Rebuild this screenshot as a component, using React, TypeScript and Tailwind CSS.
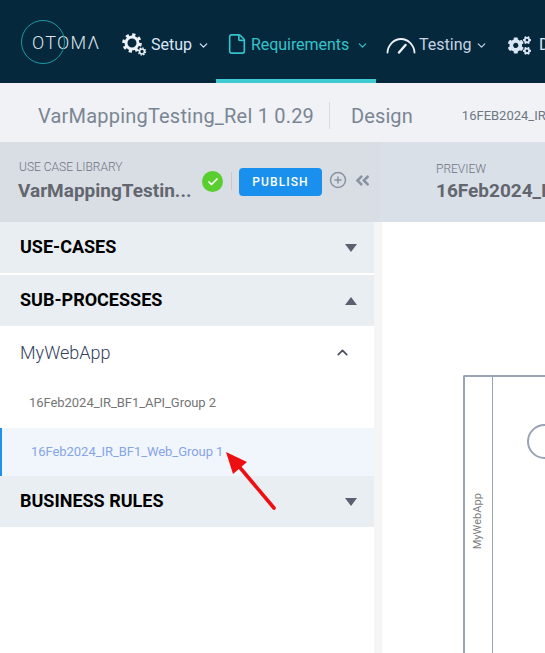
import { Check, ChevronDown, ChevronUp, CirclePlus, File } from 'lucide-react';
import { FaAngleDoubleLeft, FaCogs } from 'react-icons/fa';

function SetupIcon() {
  return (
    <svg width="25" height="24" viewBox="0 0 25 24" fill="none" stroke="#edf1f6">
      <circle cx="10" cy="10" r="6" strokeWidth="3" />
      <circle cx="10" cy="10" r="8.3" strokeWidth="3" strokeDasharray="3.2 3.3" />
      <circle cx="20" cy="18.5" r="2.4" strokeWidth="1.5" />
      <circle cx="20" cy="18.5" r="3.6" strokeWidth="1.3" strokeDasharray="1.5 1.3" />
    </svg>
  );
}

function GaugeIcon() {
  return (
    <svg width="30" height="17" viewBox="0 0 30 17" fill="none" stroke="#edf1f6" strokeLinecap="round">
      <path d="M1.5 15.5C2 8 8 2 15 2s13 6 13.5 13.5" strokeWidth="1.8" />
      <path d="M13 15.5L19.5 8" strokeWidth="2.4" />
    </svg>
  );
}

function Accordion({ title, open }: { title: string; open?: boolean }) {
  return (
    <div className="h-[51px] shrink-0 flex items-center justify-between pl-5 pr-[17px] bg-[#e9eef2]">
      <span className="text-[18px] font-bold text-black pb-[2px]">{title}</span>
      {open ? (
        <span className="w-0 h-0 border-x-[6px] border-x-transparent border-b-[8px] border-b-[#5a6070]" />
      ) : (
        <span className="w-0 h-0 border-x-[6px] border-x-transparent border-t-[8px] border-t-[#5a6070]" />
      )}
    </div>
  );
}

export default function App() {
  return (
    <div className="relative w-[545px] h-[653px] overflow-hidden bg-white flex flex-col font-['Roboto',sans-serif]">
      <nav className="h-[83px] shrink-0 bg-[#05283c] flex items-stretch">
        <div className="relative w-[122px] shrink-0 flex items-center pl-8">
          <span className="absolute left-[21px] top-[20px] w-[44px] h-[44px] rounded-full border border-[#1f9aa3]" />
          <span className="text-[18px] font-light text-[#dfe5ea] tracking-[1.3px] pt-[1px]">OTOMΛ</span>
        </div>
        <div className="w-[94px] shrink-0 flex items-center text-[#dbe6f5] pt-[7px]">
          <SetupIcon />
          <span className="ml-1 text-[16px]">Setup</span>
          <ChevronDown size={13} strokeWidth={2.2} className="ml-[5px]" />
        </div>
        <div className="w-[160px] shrink-0 flex items-center pl-[10px] border-b-4 border-[#3fcbd2] text-[#35c3cc] pt-[11px]">
          <File size={22} strokeWidth={1.8} className="mb-[2px]" />
          <span className="ml-[3px] text-[16px] tracking-[-0.05px]">Requirements</span>
          <ChevronDown size={13} strokeWidth={2.2} className="ml-[7px]" />
        </div>
        <div className="w-[132px] shrink-0 flex items-center pl-[10px] text-[#c5d3e3] pt-[7px]">
          <GaugeIcon />
          <span className="ml-[3px] text-[16px]">Testing</span>
          <ChevronDown size={13} strokeWidth={2.2} className="ml-[4px]" />
        </div>
        <div className="shrink-0 flex items-center text-[#dbe6f5] pt-[7px]">
          <FaCogs size={23} />
          <span className="ml-2 text-[16px]">Design</span>
        </div>
      </nav>

      <div className="h-[59px] shrink-0 bg-[#f0f2f5] flex items-center pl-[38px] whitespace-nowrap">
        <span className="text-[20px] text-[#7a8594] tracking-[0.2px] pt-[7px]">VarMappingTesting_Rel 1 0.29</span>
        <span className="w-px h-[27px] shrink-0 bg-[#d6dade] ml-[15px] mt-[6px]" />
        <span className="ml-[21px] text-[20px] text-[#7a8594] tracking-[0.1px] pt-[7px]">Design</span>
        <span className="ml-[49px] text-[13px] text-[#6f7784] pt-[7px]">16FEB2024_IR_BF1_Web_Group 1</span>
      </div>

      <div className="h-[80px] shrink-0 flex whitespace-nowrap">
        <div className="w-[380px] shrink-0 bg-[#d9dee5] flex items-start pl-[18px]">
          <div className="w-[176px] shrink-0 pt-[18px]">
            <div className="text-[12px] font-light text-[#6f7280] pl-px leading-[14px]">USE CASE LIBRARY</div>
            <div className="text-[19px] font-bold text-[#63666f] leading-[24px] mt-[5px]">VarMappingTestin...</div>
          </div>
          <span className="ml-[8px] mt-[29px] w-[21px] h-[21px] shrink-0 rounded-full bg-[#59cf2f] flex items-center justify-center">
            <Check size={12} strokeWidth={3.5} className="text-white" />
          </span>
          <span className="ml-[8px] mt-[30px] w-px h-[18px] shrink-0 bg-[#c5cad2]" />
          <button className="ml-[7px] mt-[26px] w-[83px] h-[28px] shrink-0 rounded-sm bg-[#1a90ee] text-white text-[12px] font-medium tracking-[1.1px]">
            PUBLISH
          </button>
          <CirclePlus size={18} strokeWidth={2} className="ml-[7px] mt-[29px] shrink-0 text-[#8a93a2]" />
          <FaAngleDoubleLeft size={17} className="ml-[7px] mt-[30px] shrink-0 text-[#8a93a2]" />
        </div>
        <div className="flex-1 bg-[#d9e0e8] pl-[56px] pt-[20px]">
          <div className="text-[12px] font-light text-[#6f7280] leading-[14px]">PREVIEW</div>
          <div className="text-[19px] font-bold text-[#63666f] leading-[24px] mt-[3px]">16Feb2024_IR_BF1_Web_Group 1</div>
        </div>
      </div>

      <div className="flex-1 flex min-h-0">
        <aside className="w-[374px] shrink-0 flex flex-col bg-white">
          <Accordion title="USE-CASES" />
          <div className="h-[2px] shrink-0 bg-white" />
          <Accordion title="SUB-PROCESSES" open />
          <div className="h-[52px] shrink-0 flex items-center justify-between pl-5 pr-[23px]">
            <span className="text-[18px] font-light text-[#33415c]">MyWebApp</span>
            <ChevronUp size={17} strokeWidth={2.4} className="text-[#4a5060]" />
          </div>
          <div className="h-[50px] shrink-0 flex items-center pl-[29px] text-[13px] text-[#757575] tracking-[-0.05px]">
            16Feb2024_IR_BF1_API_Group 2
          </div>
          <div className="h-[48px] shrink-0 flex items-center pl-[29px] text-[13px] text-[#86a4e8] bg-[#f1f6fc] border-l-2 border-[#2090ee] tracking-[-0.05px]">
            16Feb2024_IR_BF1_Web_Group 1
          </div>
          <Accordion title="BUSINESS RULES" />
        </aside>
        <div className="w-[8px] shrink-0 bg-[#f5f5f5]" />
        <main className="flex-1 pl-[81px] pt-[153px] min-w-0">
          <div className="h-[400px] border-l-2 border-t-2 border-[#98a4b3] rounded-tl-[2px] flex">
            <div className="w-[28px] shrink-0 border-r border-[#98a4b3] flex justify-center items-start pt-[116px]">
              <span className="text-[11px] text-[#7d7d7d] tracking-[0.05px] [writing-mode:vertical-rl] rotate-180">MyWebApp</span>
            </div>
            <div className="pl-[34px] pt-[47px]">
              <div className="w-[35px] h-[35px] rounded-full border-2 border-[#98a4b3]" />
            </div>
          </div>
        </main>
      </div>

      <svg className="absolute left-[220px] top-[445px]" width="64" height="72" viewBox="0 0 64 72" fill="none">
        <path d="M54 63L17 19" stroke="#ee0f12" strokeWidth="3.6" strokeLinecap="round" />
        <path d="M6 7L27 17L13 29Z" fill="#ee0f12" />
      </svg>
    </div>
  );
}
